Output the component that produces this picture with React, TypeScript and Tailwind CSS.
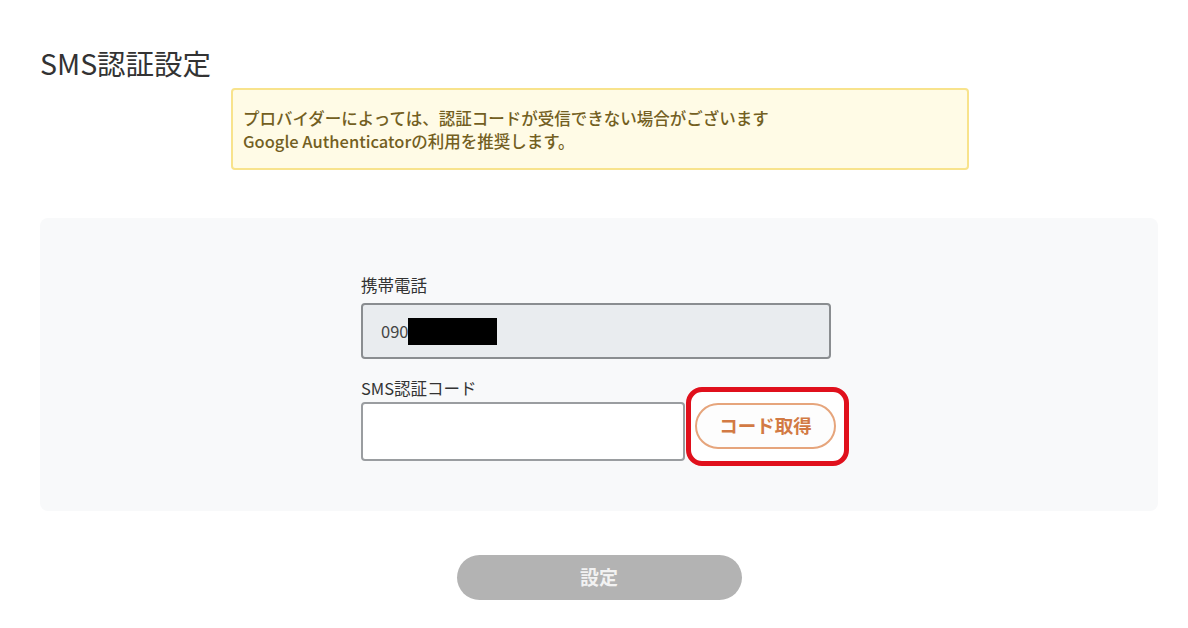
import React from "react";

export default function App() {
  return (
    <div
      className="w-[1188px] h-[628px] bg-white overflow-hidden px-[40px] pt-[44px]"
      style={{ fontFamily: '"Noto Sans CJK JP", "Noto Sans", sans-serif' }}
    >
      <h1 className="text-[28.5px] leading-[38px] text-[#333333] font-normal">SMS認証設定</h1>
      <div className="ml-[191px] mt-[6px] w-[738px] h-[82px] rounded-[4px] border-2 border-[#f8e38c] bg-[#fffbe6] pl-[10px] pt-[17px] text-[16.5px] leading-[23px] font-medium text-[#735f22]">
        <p>プロバイダーによっては、認証コードが受信できない場合がございます</p>
        <p>Google Authenticatorの利用を推奨します。</p>
      </div>
      <div className="mt-[48px] w-[1118px] h-[293px] rounded-[8px] bg-[#f8f9fa] pl-[321px] pt-[56px]">
        <div className="text-[16.5px] leading-[22px] text-[#333333]">携帯電話</div>
        <div className="mt-[7px] w-[470px] h-[56px] rounded-[4px] border-2 border-[#8a8d90] bg-[#e9ecef] flex items-center pl-[18px]">
          <span className="text-[16.5px] text-[#444444]">090</span>
          <span className="inline-block w-[89px] h-[27px] bg-black"></span>
        </div>
        <div className="mt-[18px] text-[16.5px] leading-[22px] text-[#333333]">SMS認証コード</div>
        <div className="mt-[3px] flex items-start gap-[10px]">
          <div className="w-[324px] h-[59px] rounded-[4px] border-2 border-[#9a9da0] bg-white"></div>
          <div className="relative mt-[1px]">
            <div className="absolute left-[-9px] top-[-16px] right-[-13px] bottom-[-17px] rounded-[16px] border-[5px] border-[#e0101c] bg-white"></div>
            <button className="relative w-[141px] h-[46px] rounded-full border-2 border-[#e6a57c] bg-[#fdfdfd] text-[18.5px] font-bold text-[#d27a44]">
              コード取得
            </button>
          </div>
        </div>
      </div>
      <div className="w-[1118px] flex justify-center mt-[44px]">
        <button className="w-[285px] h-[45px] rounded-full bg-[#b3b3b3] text-[19px] font-bold text-[#f2f2f2]">
          設定
        </button>
      </div>
    </div>
  );
}
